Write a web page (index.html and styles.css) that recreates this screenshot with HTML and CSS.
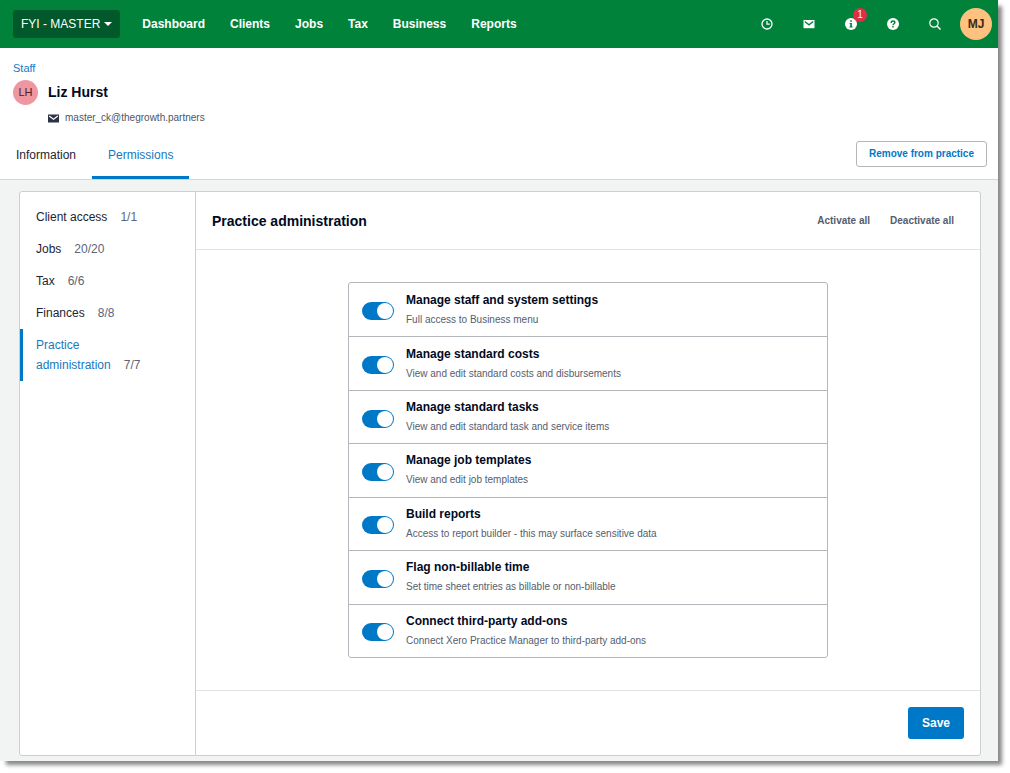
FILE: index.html
```
<!DOCTYPE html>
<html lang="en">
<head>
<meta charset="utf-8">
<meta name="viewport" content="width=device-width, initial-scale=1">
<title>Liz Hurst - Permissions</title>
<link rel="stylesheet" href="styles.css">
</head>

<body>
<div class="page">

<header class="topbar">
  <button type="button" class="org">FYI - MASTER <span class="caret"></span></button>
  <nav class="main-nav">
    <a href="#">Dashboard</a>
    <a href="#">Clients</a>
    <a href="#">Jobs</a>
    <a href="#">Tax</a>
    <a href="#">Business</a>
    <a href="#">Reports</a>
  </nav>
  <div class="tools">
    <button type="button" class="tool" aria-label="Timer">
      <svg width="12" height="12" viewBox="0 0 12 12"><circle cx="6" cy="6" r="5" fill="none" stroke="#fff" stroke-width="1.3"/><path d="M6 3v3.2h2.8" fill="none" stroke="#fff" stroke-width="1.2"/></svg>
    </button>
    <button type="button" class="tool" aria-label="Messages">
      <svg width="12" height="12" viewBox="0 0 12 12"><path d="M.5 2h11v8.200H.5z" fill="#fff"/><path d="M1.800 3.400L6 6.800l4.200-3.400" fill="none" stroke="#00823b" stroke-width="1.3"/></svg>
    </button>
    <button type="button" class="tool" aria-label="Notifications">
      <svg width="12" height="12" viewBox="0 0 12 12"><circle cx="6" cy="6" r="6" fill="#fff"/><path d="M5.200 2.300h1.700v1.500H5.200zM4.600 4.900h2.300v3.600h.8v1H4.400v-1h.8V5.900h-.6z" fill="#00823b"/></svg>
      <span class="badge">1</span>
    </button>
    <button type="button" class="tool" aria-label="Help">
      <svg width="12" height="12" viewBox="0 0 12 12"><circle cx="6" cy="6" r="6" fill="#fff"/><path d="M4.200 4.900C4.200 3.600 5 3 6 3s1.900.7 1.900 1.600C7.900 5.800 6 5.800 6 7.200" fill="none" stroke="#00823b" stroke-width="1.4"/><path d="M5.300 8h1.400v1.400H5.300z" fill="#00823b"/></svg>
    </button>
    <button type="button" class="tool" aria-label="Search">
      <svg width="12" height="12" viewBox="0 0 12 12"><circle cx="5" cy="5" r="4.200" fill="none" stroke="#fff" stroke-width="1.2"/><path d="M8 8l3.500 3.500" stroke="#fff" stroke-width="1.5"/></svg>
    </button>
  </div>
  <button type="button" class="user">MJ</button>
</header>

<section class="profile">
  <a class="crumb" href="#">Staff</a>
  <div class="person">
    <span class="avatar">LH</span>
    <h1>Liz Hurst</h1>
  </div>
  <div class="email">
    <svg width="11" height="9" viewBox="0 0 11 9"><path d="M0 .5h11v8H0z" fill="#2b3346"/><path d="M1.200 2l4.300 3.300L9.800 2" fill="none" stroke="#fff" stroke-width="1.2"/></svg>
    master_ck@thegrowth.partners
  </div>
  <div class="tab-row">
    <nav class="tabs">
      <a href="#">Information</a>
      <a href="#" class="active">Permissions</a>
    </nav>
    <button type="button" class="remove">Remove from practice</button>
  </div>
</section>

<main class="content">
  <div class="card">
    <nav class="side">
      <a href="#">Client access<span class="count">1/1</span></a>
      <a href="#">Jobs<span class="count">20/20</span></a>
      <a href="#">Tax<span class="count">6/6</span></a>
      <a href="#">Finances<span class="count">8/8</span></a>
      <a href="#" class="active">Practice administration<span class="count">7/7</span></a>
    </nav>
    <form class="panel">
      <div class="panel-head">
        <h2>Practice administration</h2>
        <button type="button" class="link">Activate all</button>
        <button type="button" class="link">Deactivate all</button>
      </div>
      <div class="panel-body">
        <div class="permissions">
          <label class="permission">
            <input type="checkbox" class="switch" checked>
            <span class="text"><strong>Manage staff and system settings</strong><small>Full access to Business menu</small></span>
          </label>
          <label class="permission">
            <input type="checkbox" class="switch" checked>
            <span class="text"><strong>Manage standard costs</strong><small>View and edit standard costs and disbursements</small></span>
          </label>
          <label class="permission">
            <input type="checkbox" class="switch" checked>
            <span class="text"><strong>Manage standard tasks</strong><small>View and edit standard task and service items</small></span>
          </label>
          <label class="permission">
            <input type="checkbox" class="switch" checked>
            <span class="text"><strong>Manage job templates</strong><small>View and edit job templates</small></span>
          </label>
          <label class="permission">
            <input type="checkbox" class="switch" checked>
            <span class="text"><strong>Build reports</strong><small>Access to report builder - this may surface sensitive data</small></span>
          </label>
          <label class="permission">
            <input type="checkbox" class="switch" checked>
            <span class="text"><strong>Flag non-billable time</strong><small>Set time sheet entries as billable or non-billable</small></span>
          </label>
          <label class="permission">
            <input type="checkbox" class="switch" checked>
            <span class="text"><strong>Connect third-party add-ons</strong><small>Connect Xero Practice Manager to third-party add-ons</small></span>
          </label>
        </div>
      </div>
      <div class="panel-foot">
        <button type="submit" class="save">Save</button>
      </div>
    </form>
  </div>
</main>

</div>
</body>
</html>
```
FILE: styles.css
```
* {
  box-sizing: border-box;
}

body {
  margin: 0;
  background: #fff;
  color: #1c2433;
  font-family: "Liberation Sans", Arial, sans-serif;
  font-size: 12px;
  line-height: 20px;
}

a {
  color: inherit;
  text-decoration: none;
}

button {
  padding: 0;
  border: 0;
  background: none;
  font: inherit;
  cursor: pointer;
}

h1, h2 {
  margin: 0;
  color: #000a1e;
  font-size: 14px;
  line-height: 20px;
}

.page {
  display: flex;
  flex-direction: column;
  min-height: calc(100vh - 12px);
  margin: 0 12px 12px 0;
  background: #f2f4f4;
  box-shadow: 5px 5px 4px -1px #888;
}

/* top bar */
.topbar {
  display: flex;
  align-items: center;
  height: 48px;
  padding: 0 6px 0 13px;
  background: #00823b;
  color: #fff;
}

.org {
  display: flex;
  align-items: center;
  gap: 4px;
  height: 28px;
  padding: 0 8px;
  border-radius: 3px;
  background: #00582b;
  color: #fff;
}

.caret {
  border: 4px solid transparent;
  border-top-color: #fff;
  border-bottom: 0;
}

.main-nav {
  display: flex;
  gap: 25px;
  margin-left: 22px;
  font-weight: bold;
}

.tools {
  display: flex;
  gap: 30px;
  margin-left: auto;
}

.tool {
  position: relative;
  display: flex;
}

.badge {
  position: absolute;
  top: -10px;
  left: 8px;
  width: 14px;
  height: 14px;
  border-radius: 50%;
  background: #de2f46;
  color: #fff;
  font-size: 10px;
  line-height: 14px;
}

.user {
  width: 32px;
  height: 32px;
  margin-left: 19px;
  border-radius: 50%;
  background: #fdc180;
  color: #3c2a14;
  font-weight: bold;
}

/* staff member */
.profile {
  padding-top: 10px;
  border-bottom: 1px solid #d3d7d9;
  background: #fff;
}

.crumb {
  margin-left: 13px;
  color: #1778c0;
  font-size: 11px;
}

.person {
  display: flex;
  align-items: center;
  gap: 10px;
  margin: 2px 13px 0;
}

.person h1 {
  padding-bottom: 2px;
}

.avatar {
  width: 25px;
  border-radius: 50%;
  background: #ef97a1;
  color: #4d2028;
  font-size: 11px;
  line-height: 25px;
  text-align: center;
}

.email {
  display: flex;
  align-items: center;
  gap: 6px;
  margin: 3px 0 0 48px;
  color: #4d5566;
  font-size: 10px;
}

.tab-row {
  display: flex;
  align-items: center;
  justify-content: space-between;
  padding-right: 11px;
}

.tabs {
  display: flex;
}

.tabs a {
  padding: 17px 16px 11px;
  border-bottom: 3px solid transparent;
}

.tabs .active {
  border-color: #0078c8;
  color: #1778c0;
}

.remove {
  height: 26px;
  padding: 0 12px;
  border: 1px solid #b3b7bc;
  border-radius: 3px;
  color: #0078c8;
  font-size: 10px;
  font-weight: bold;
}

/* permissions card */
.content {
  display: flex;
  flex: 1;
  padding: 11px 17px 5px 19px;
}

.card {
  display: flex;
  flex: 1;
  border: 1px solid #cccfd2;
  border-radius: 3px;
  background: #fff;
}

.side {
  width: 176px;
  padding-top: 9px;
  border-right: 1px solid #cccfd2;
}

.side a {
  display: block;
  padding: 6px 48px 6px 13px;
  border-left: 3px solid transparent;
}

.side .active {
  border-color: #0078c8;
  color: #1778c0;
}

.count {
  margin-left: 13px;
  color: #5d6575;
}

.panel {
  display: flex;
  flex: 1;
  flex-direction: column;
}

.panel-head {
  display: flex;
  align-items: center;
  gap: 20px;
  height: 58px;
  padding: 0 26px 0 16px;
  border-bottom: 1px solid #e0e2e4;
}

.panel-head h2 {
  margin-right: auto;
}

.link {
  color: #555d6e;
  font-size: 10px;
  font-weight: bold;
}

.panel-body {
  display: flex;
  flex: 1;
  align-items: center;
  justify-content: center;
}

.permissions {
  display: grid;
  grid-auto-rows: 1fr;
  width: 480px;
  height: 376px;
  border: 1px solid #b3b7bc;
  border-radius: 3px;
}

.permission {
  display: flex;
  align-items: center;
  gap: 12px;
  padding: 0 13px;
}

.permission + .permission {
  border-top: 1px solid #b3b7bc;
}

.switch {
  display: flex;
  justify-content: flex-start;
  width: 32px;
  height: 18px;
  margin: 3px 0 0;
  padding: 1px;
  border-radius: 9px;
  background: #8d939e;
  appearance: none;
}

.switch::before {
  content: "";
  width: 16px;
  border-radius: 50%;
  background: #fff;
}

.switch:checked {
  justify-content: flex-end;
  background: #0078c8;
}

.text strong, .text small {
  display: block;
}

.text strong {
  color: #000a1e;
}

.text small {
  color: #555d6e;
  font-size: 10px;
}

.panel-foot {
  display: flex;
  justify-content: flex-end;
  padding: 16px;
  border-top: 1px solid #e0e2e4;
}

.save {
  width: 56px;
  height: 32px;
  border-radius: 3px;
  background: #0078c8;
  color: #fff;
  font-weight: bold;
}
```
